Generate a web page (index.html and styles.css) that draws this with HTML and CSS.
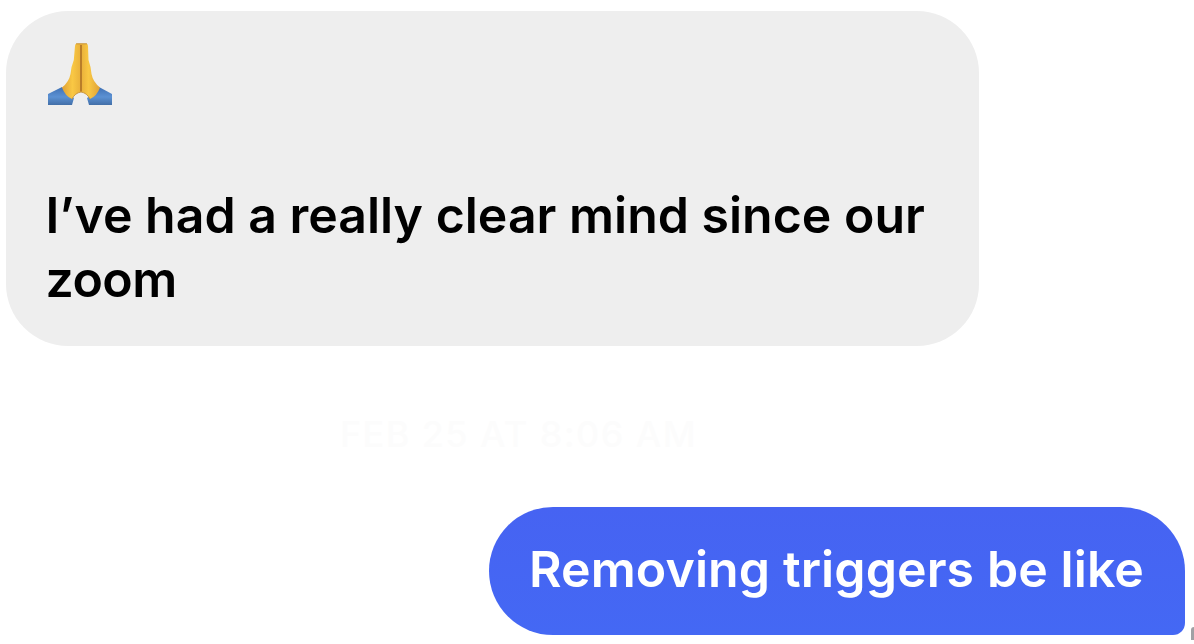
FILE: index.html
```html
<!DOCTYPE html>
<html lang="en">
<head>
<meta charset="utf-8">
<title>Chat</title>
<link rel="stylesheet" href="styles.css">
</head>
<body>
<main class="chat">
  <div class="bubble received">
    <svg class="hands" viewBox="0 0 66 64" aria-label="Folded hands">
      <defs>
        <linearGradient id="skinL" x1="0" x2="1"><stop offset="0" stop-color="#dfa136"/><stop offset=".55" stop-color="#f9c844"/><stop offset="1" stop-color="#e9b03a"/></linearGradient>
        <linearGradient id="skinR" x1="1" x2="0"><stop offset="0" stop-color="#dfa136"/><stop offset=".6" stop-color="#f9c844"/><stop offset="1" stop-color="#e9b03a"/></linearGradient>
        <linearGradient id="sleeve" x1="0" x2="0" y1="0" y2="1"><stop offset="0" stop-color="#3f70b4"/><stop offset=".55" stop-color="#5b91d3"/><stop offset="1" stop-color="#426fa8"/></linearGradient>
      </defs>
      <path fill="url(#sleeve)" d="M1 52 15 45Q20 52 27 56L25 63H1Z"/>
      <path fill="url(#sleeve)" d="M65 52 52 45Q47 52 40 56L42 63H65Z"/>
      <path fill="url(#skinL)" d="M34 1.5H30.500Q28 1 28 4L26.800 18Q24 25 23.500 32 22 40 15 45.500 18 54 25 57 28 51 34 50Z"/>
      <path fill="url(#skinR)" d="M34 1.500H38.500Q41 1 41 4L41.500 18Q44 25 44.500 32 46 40 53 45.500 50 54 43 57 40 51 34 50Z"/>
      <path fill="none" stroke="#a96c24" stroke-width="1.500" d="M34 3V49.500"/>
      <path fill="none" stroke="#c08a34" stroke-width=".8" d="M29 1.800H40M25 57Q28 51 34 50 40 51 43 57"/>
    </svg>
    <p class="text">I’ve had a really clear mind since our<br><span class="last">zoom</span></p>
  </div>
  <time class="stamp">FEB 25 AT 8:06 AM</time>
  <div class="sent-row">
    <div class="bubble sent"><p class="text">Removing triggers be like</p></div>
    <span class="edge"></span>
  </div>
</main>
</body>
</html>
```
FILE: styles.css
```css
* { box-sizing: border-box; }
body { margin: 0; background: #fff; overflow: hidden; }
.chat {
  display: flex;
  flex-direction: column;
  width: 1194px;
  height: 644px;
  padding: 11px 0 0 6px;
  font-family: Inter, "Liberation Sans", sans-serif;
}
.text { margin: 0; font-size: 50px; font-weight: 600; line-height: 64.5px; white-space: nowrap; }
.received {
  width: 973px;
  height: 335px;
  padding: 31px 39.5px 0;
  border-radius: 62px;
  background: #eee;
  color: #000;
}
.hands { display: block; width: 66px; height: 64px; margin: 0 0 76.5px 1.5px; }
.received .text { letter-spacing: 0; }
.last { letter-spacing: -0.5px; }
.stamp {
  display: block;
  width: 360px;
  margin: 68px 0 0 334px;
  color: #fcfcfc;
  font-size: 36px;
  font-weight: 500;
  line-height: 40px;
  letter-spacing: 1.4px;
  white-space: nowrap;
}
.sent-row { display: flex; align-items: flex-end; margin: 53px 0 0 483px; }
.sent {
  width: 696px;
  height: 128px;
  padding: 30px 40px 0;
  border-radius: 64px 64px 12px 64px;
  background: linear-gradient(#4663f2, #4468f4);
  color: #fff;
}
.sent .text { letter-spacing: 0.1px; }
.edge { width: 3px; height: 13px; margin: 0 0 -5px 6px; border-radius: 4px 0 0 0; background: #a0a0a4; }
```
